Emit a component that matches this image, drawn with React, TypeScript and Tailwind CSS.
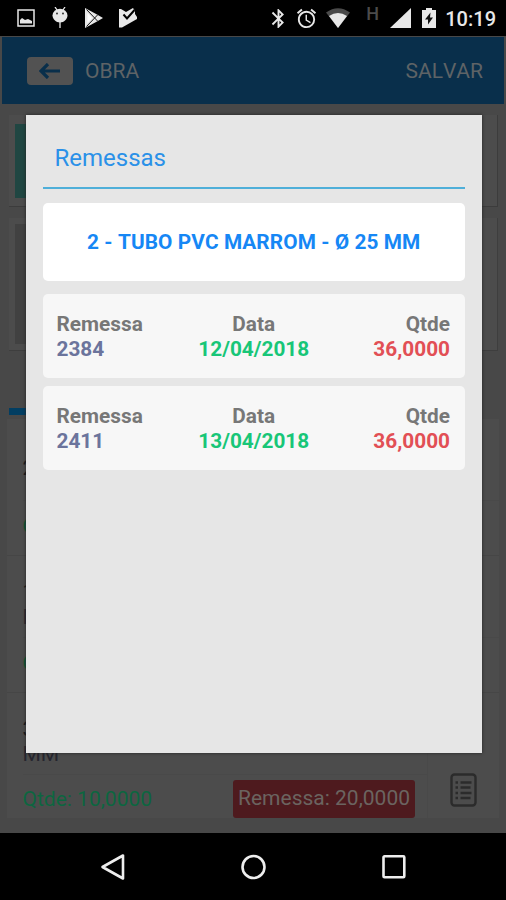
import React from "react";
import { MdAlarm, MdBluetooth } from "react-icons/md";

interface Shipment {
  id: string;
  date: string;
  amount: string;
}

interface Item {
  name: string;
  detail?: string;
  amount: string;
}

const shipments: Shipment[] = [
  { id: "2384", date: "12/04/2018", amount: "36,0000" },
  { id: "2411", date: "13/04/2018", amount: "36,0000" },
];

const StatusBar: React.FC = () => (
  <div className="flex h-9 shrink-0 items-center bg-black text-[#e8e8e8]">
    <svg className="ml-[17px] h-[18px] w-[18px]" viewBox="0 0 18 18">
      <rect x="1" y="1" width="16" height="16" fill="none" stroke="currentColor" strokeWidth="1.5" />
      <path d="M3 14.500v-3.500l2-2 3 2 3-1 4 2v2.500z" fill="currentColor" />
    </svg>
    <svg className="ml-[17px] h-[22px] w-4" viewBox="0 0 16 22">
      <path d="M3 0l2 3M13 0l-2 3M8 14v7" stroke="currentColor" strokeWidth="1.3" />
      <path d="M.5 8.5a7.5 6.8 0 0 1 15 0c0 3.5-3.5 7-7.500 7s-7.500-3.500-7.500-7z" fill="currentColor" />
      <circle cx="5" cy="6.500" r=".9" fill="#222" />
      <circle cx="11" cy="6.500" r=".9" fill="#222" />
    </svg>
    <svg className="ml-[17px] h-5 w-[18px]" viewBox="0 0 18 20">
      <path d="M0 0l12 6.500L18 10l-6 3.500L0 20z" fill="currentColor" />
      <path d="M1.500 1.500L12.500 13M1.500 18.500L12.500 7" stroke="#111" strokeWidth="1" />
      <path d="M2.500 5v10l4.500-5z" fill="#fff" />
    </svg>
    <svg className="ml-4 h-5 w-[18px]" viewBox="0 0 18 20">
      <path d="M0 1h2l5 3 7-4 2 3v3l2 3v2L3 19.500H0z" fill="currentColor" />
      <path d="M4.500 6.500l3.500 4L15.500 2" fill="none" stroke="#000" strokeWidth="2" />
    </svg>
    <div className="flex-1" />
    <MdBluetooth className="h-[23px] w-[23px]" />
    <MdAlarm className="ml-[5px] h-[23px] w-[23px]" />
    <svg className="ml-2 h-5 w-6" viewBox="0 0 24 20">
      <path d="M0 4.500Q12-4 24 4.500L12 20z" fill="#4a4a4a" />
      <path d="M3 8Q12 2 21 8L12 20z" fill="currentColor" />
    </svg>
    <span className="mb-2 ml-4 w-[13px] text-[18px] leading-5 font-medium text-[#4b4b4b]">H</span>
    <svg className="ml-[11px] h-5 w-[21px]" viewBox="0 0 21 20">
      <path d="M0 20L21 0v20z" fill="currentColor" />
    </svg>
    <svg className="ml-[11px] h-5 w-[14px]" viewBox="0 0 14 20">
      <path d="M4 0h6v2h4v18H0V2h4z" fill="currentColor" />
      <path d="M8.500 4.500L3 11.500h3v5l5-7H8z" fill="#111" />
    </svg>
    <span className="mr-[10px] ml-[9px] pt-0.5 text-[20px] leading-5 font-medium">10:19</span>
  </div>
);

const Header: React.FC = () => (
  <div className="mx-0.5 mt-px flex h-[67px] items-center bg-[#092f4b] pr-[21px] pl-[25px] text-[21px] text-[#5e6366]">
    <div className="flex h-7 w-[46px] items-center justify-center rounded bg-[#525252]">
      <svg className="h-4 w-[22px]" viewBox="0 0 22 16">
        <path d="M21 8H3M9 1L2 8l7 7" fill="none" stroke="#092f4b" strokeWidth="3.200" />
      </svg>
    </div>
    <span className="ml-3 pt-0.5">OBRA</span>
    <span className="ml-auto pt-0.5">SALVAR</span>
  </div>
);

const ListIcon: React.FC = () => (
  <svg className="h-[34px] w-[27px]" viewBox="0 0 27 34">
    <rect x="1.500" y="1.500" width="24" height="31" rx="3" fill="none" stroke="#2b2b2b" strokeWidth="2.400" />
    <path
      d="M5.500 9.500H8M10.500 9.500h11M5.500 14.500H8M10.500 14.500h10M5.500 20H8M10.500 20h11M5.500 25H8M10.500 25h10"
      stroke="#2b2b2b"
      strokeWidth="2.600"
    />
  </svg>
);

const ItemTitle: React.FC<Pick<Item, "name" | "detail">> = ({ name, detail }) => (
  <div className="flex h-[82px] flex-col justify-center border-b border-[#494949] pt-[17px] leading-[25px] text-[#18181c]">
    <span>{name}</span>
    {detail && <span className="text-[#26262f]">{detail}</span>}
  </div>
);

const ItemRow: React.FC<Item> = ({ name, detail, amount }) => (
  <div className="flex h-[137px] flex-col border-b border-[#464646] pl-[15.5px] text-[21px]">
    <ItemTitle name={name} detail={detail} />
    <span className="pt-[9px] leading-8 text-[#0c5533]">{amount}</span>
  </div>
);

const ShipmentCard: React.FC<Shipment> = ({ id, date, amount }) => (
  <div className="grid h-21 grid-cols-3 rounded-[5px] bg-[#f7f7f7] px-[14px] pt-[18px] text-[20.8px] leading-[25px] font-bold text-[#777777]">
    <div>
      <p>Remessa</p>
      <p className="text-[#6b749c]">{id}</p>
    </div>
    <div className="text-center">
      <p>Data</p>
      <p className="text-[#18c678]">{date}</p>
    </div>
    <div className="pr-px text-right">
      <p>Qtde</p>
      <p className="text-[#e24f55]">{amount}</p>
    </div>
  </div>
);

const ShipmentDialog: React.FC = () => (
  <div className="absolute top-[115px] left-[25.5px] h-[638px] w-[456.5px] bg-[#e6e6e6] px-[17px] shadow-[0_0_3px_0_#222]">
    <h2 className="h-[74px] border-b-2 border-[#4fafd9] pt-[29px] pl-3 text-[24px] leading-7 text-[#2b91e8]">
      Remessas
    </h2>
    <div className="mt-[14px] mb-[13px] flex h-[78px] items-center justify-center rounded-[5px] bg-white pt-0.5 text-[20.8px] font-bold tracking-[0.1px] text-[#1687f5]">
      2 - TUBO PVC MARROM - Ø 25 MM
    </div>
    <div className="flex flex-col gap-2">
      {shipments.map((shipment) => (
        <ShipmentCard key={shipment.id} {...shipment} />
      ))}
    </div>
  </div>
);

const NavBar: React.FC = () => (
  <div className="flex h-[67px] shrink-0 items-center justify-center gap-[114px] bg-black text-[#eeeeee]">
    <svg className="h-7 w-[26px]" viewBox="0 0 26 28" fill="none" stroke="currentColor" strokeWidth="2.600">
      <path d="M23 2.500v23L2.500 14z" strokeLinejoin="round" />
    </svg>
    <svg className="h-7 w-[26px]" viewBox="0 0 26 28" fill="none" stroke="currentColor" strokeWidth="2.600">
      <circle cx="13.500" cy="14" r="11" />
    </svg>
    <svg className="h-7 w-[26px]" viewBox="0 0 26 28" fill="none" stroke="currentColor" strokeWidth="2.600">
      <rect x="3.500" y="3.300" width="20.800" height="21" rx="1" />
    </svg>
  </div>
);

export default function App() {
  return (
    <div className="relative flex h-[900px] w-[506px] flex-col overflow-hidden bg-black font-['Roboto',sans-serif] [font-kerning:none]">
      <StatusBar />
      <div className="flex h-[797px] shrink-0 flex-col overflow-hidden bg-[#484848]">
        <Header />
        <div className="mt-[11px] mr-2 ml-[9px] flex h-[92px] items-center border-r border-b border-[#3c3c3c] bg-[#4c4c4c] pl-1.5">
          <div className="h-[74px] w-24 bg-[#204642]" />
        </div>
        <div className="mt-[11px] mr-2 ml-[9px] flex h-[133px] items-center border-r border-b border-[#3e3e3e] bg-[#4c4c4c] pl-1.5">
          <div className="h-[120px] w-24 bg-[#414141]" />
        </div>
        <div className="mt-[57px] ml-[9px] h-[7px] w-40 shrink-0 bg-[#023e62]" />
        <div className="mx-[7px] mt-1 flex h-[399px] shrink-0 flex-col bg-[#4c4c4c]">
          <ItemRow name="2 - TUBO" amount="Qtde: 36,0000" />
          <ItemRow name="1 - TUBO PVC MARROM" detail="MM" amount="Qtde: 36,0000" />
          <div className="flex h-[125px] pl-[15.5px] text-[21px]">
            <div className="flex w-[404.5px] flex-col">
              <ItemTitle name="3 - TUBO PVC" detail="MM" />
              <div className="flex h-[43px] items-center justify-between pt-[5px] pr-3">
                <span className="pt-px text-[#0c6640]">Qtde: 10,0000</span>
                <span className="flex h-[38px] items-center rounded-[3px] bg-[#4e1a1e] px-[5px] text-[#6b6460]">
                  Remessa: 20,0000
                </span>
              </div>
            </div>
            <div className="flex flex-1 items-end border-l border-[#494949] pb-[11px] pl-[22px]">
              <ListIcon />
            </div>
          </div>
        </div>
      </div>
      <NavBar />
      <ShipmentDialog />
    </div>
  );
}
